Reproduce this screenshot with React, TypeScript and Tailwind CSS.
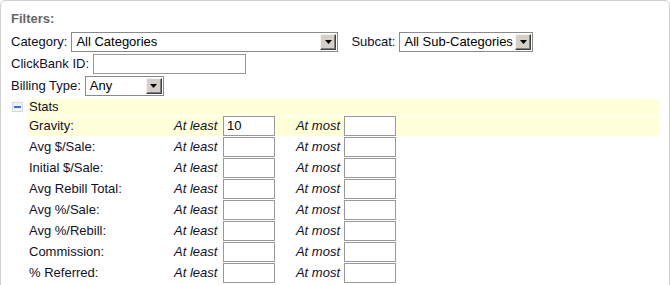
import React from 'react';

const stats = [
  { name: 'Gravity:', min: '10', hot: true },
  { name: 'Avg $/Sale:', min: '' },
  { name: 'Initial $/Sale:', min: '' },
  { name: 'Avg Rebill Total:', min: '' },
  { name: 'Avg %/Sale:', min: '' },
  { name: 'Avg %/Rebill:', min: '' },
  { name: 'Commission:', min: '' },
  { name: '% Referred:', min: '' },
];

const Select: React.FC<{ value: string; width: string }> = ({ value, width }) => (
  <div className={`${width} h-[20px] flex items-center border border-[#8a8a8a] bg-white p-[1px]`}>
    <span className="flex-1 pl-[3px] text-black leading-[16px] whitespace-nowrap overflow-hidden">{value}</span>
    <span className="w-[16px] h-[16px] flex items-center justify-center bg-[#d4d0c8] border border-t-[#f4f4f4] border-l-[#f4f4f4] border-r-[#404040] border-b-[#404040] shadow-[inset_-1px_-1px_0_#808080]">
      <svg width="7" height="4" viewBox="0 0 7 4">
        <path d="M0 0h7L3.5 4z" fill="#000" />
      </svg>
    </span>
  </div>
);

const TextBox: React.FC<{ value?: string; width: string }> = ({ value, width }) => (
  <div className={`${width} h-[20px] border border-[#999] bg-white pl-[3px] leading-[18px] text-black`}>{value}</div>
);

export default function App() {
  return (
    <div className="w-[670px] h-[285px] overflow-hidden bg-white font-['Liberation_Sans',Arial,sans-serif] text-[13px] text-[#10102a]">
      <div className="h-[300px] border border-[#cfcfcf] rounded-t-[5px] pl-[10px] pr-[9px] pt-[10px]">
        <div className="font-bold text-[#666] leading-[15px]">Filters:</div>

        <div className="mt-[6px] flex flex-col gap-[2px]">
          <div className="flex items-center h-[20px]">
            <span className="mr-[4px]">Category:</span>
            <Select value="All Categories" width="w-[267px]" />
            <span className="ml-[13px] mr-[4px]">Subcat:</span>
            <Select value="All Sub-Categories" width="w-[134px]" />
          </div>
          <div className="flex items-center h-[20px]">
            <span className="mr-[4px]">ClickBank ID:</span>
            <TextBox width="w-[153px]" />
          </div>
          <div className="flex items-center h-[20px]">
            <span className="mr-[4px]">Billing Type:</span>
            <Select value="Any" width="w-[79px]" />
          </div>
        </div>

        <div className="mt-[3px] flex items-center h-[16px] mb-[1px]">
          <span className="w-[16px] h-[16px] flex items-center">
            <svg width="11" height="10" viewBox="0 0 11 10" className="ml-[1px]">
              <rect x="0.5" y="0.5" width="10" height="9" fill="#f3f3f3" stroke="#d6d6d6" />
              <rect x="2" y="4" width="7" height="2" fill="#3b6fd8" />
            </svg>
          </span>
          <div className="flex-1 h-full bg-[#ffffda] pl-[2px] leading-[16px]">Stats</div>
        </div>

        <div className="ml-[16px] flex flex-col gap-[1px]">
          {stats.map((s) => (
            <div key={s.name} className={`flex items-center h-[20px] ${s.hot ? 'bg-[#ffffda]' : ''}`}>
              <span className="w-[147px] pl-[2px]">{s.name}</span>
              <span className="w-[49px] italic">At least</span>
              <TextBox value={s.min} width="w-[52px]" />
              <span className="w-[69px] italic text-right pr-[4px]">At most</span>
              <TextBox width="w-[52px]" />
            </div>
          ))}
        </div>
      </div>
    </div>
  );
}
